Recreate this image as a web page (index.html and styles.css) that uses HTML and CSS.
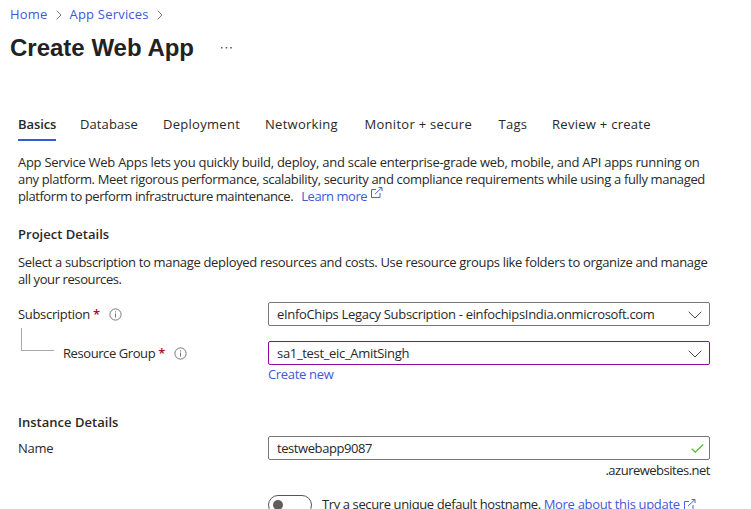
FILE: index.html
```html
<!DOCTYPE html>
<html lang="en">
<head>
<meta charset="utf-8">
<title>Create Web App</title>
<link rel="stylesheet" href="styles.css">
</head>
<body>
<header class="top">
  <nav class="crumbs">
    <a class="c-home">Home</a>
    <svg class="sep" width="6" height="10" viewBox="0 0 6 10"><path d="M.7.7 5 5 .7 9.3"/></svg>
    <a class="c-apps">App Services</a>
    <svg class="sep" width="6" height="10" viewBox="0 0 6 10"><path d="M.7.7 5 5 .7 9.3"/></svg>
  </nav>
  <div class="title-row">
    <h1>Create Web App</h1>
    <svg class="dots" width="11" height="2" viewBox="0 0 11 2"><path d="M0 0h1.500v1.500H0zM4.700 0h1.500v1.500H4.700zM9.300 0h1.500v1.500H9.300z"/></svg>
  </div>
</header>
<main>
  <nav class="tabs">
    <a class="tab t1 active">Basics</a><a class="tab t2">Database</a><a class="tab t3">Deployment</a><a class="tab t4">Networking</a><a class="tab t5">Monitor + secure</a><a class="tab t6">Tags</a><a class="tab t7">Review + create</a>
  </nav>
  <p class="intro"><span class="l1">App Service Web Apps lets you quickly build, deploy, and scale enterprise-grade web, mobile, and API apps running on</span><br><span class="l2">any platform. Meet rigorous performance, scalability, security and compliance requirements while using a fully managed</span><br><span class="l3">platform to perform infrastructure maintenance.</span><a class="learn">Learn more</a><svg class="ext up" width="12" height="11" viewBox="0 0 12 11"><path d="M5 2.500H.5v8h8.500V6M4 7 11 .5M7.500.5H11V4"/></svg></p>
  <h2 class="h-project">Project Details</h2>
  <p class="select-text"><span class="l4">Select a subscription to manage deployed resources and costs. Use resource groups like folders to organize and manage</span><br><span class="l5">all your resources.</span></p>
  <div class="row">
    <div class="label"><span class="f-sub">Subscription</span><span class="req">*</span><svg class="info" width="13" height="13" viewBox="0 0 13 13"><circle cx="6.500" cy="6.500" r="5.600"/><path d="M6.500 5.500v4M6.500 3.300v1.200"/></svg></div>
    <div class="field"><span class="v-sub">eInfoChips Legacy Subscription - einfochipsIndia.onmicrosoft.com</span><svg class="chev" width="14" height="8" viewBox="0 0 14 8"><path d="M.7.8 7 7 13.300.8"/></svg></div>
  </div>
  <div class="row second">
    <div class="label"><i class="elbow"></i><span class="f-rg">Resource Group</span><span class="req">*</span><svg class="info" width="13" height="13" viewBox="0 0 13 13"><circle cx="6.500" cy="6.500" r="5.600"/><path d="M6.500 5.500v4M6.500 3.300v1.200"/></svg></div>
    <div class="field focus"><span class="v-rg">sa1_test_eic_AmitSingh</span><svg class="chev" width="14" height="8" viewBox="0 0 14 8"><path d="M.7.8 7 7 13.300.8"/></svg></div>
  </div>
  <div class="create"><a class="new">Create new</a></div>
  <h2 class="h-instance">Instance Details</h2>
  <div class="row name">
    <div class="label"><span class="f-name">Name</span></div>
    <div class="field"><span class="v-name">testwebapp9087</span><svg class="check" width="13" height="9" viewBox="0 0 13 9"><path d="M.7 4.700 4.300 8.200 12.300.5"/></svg></div>
  </div>
  <div class="suffix"><span class="domain">.azurewebsites.net</span></div>
  <div class="toggle-row"><span class="toggle"></span><span class="try">Try a secure unique default hostname.</span><a class="more">More about this update</a><svg class="ext" width="12" height="11" viewBox="0 0 12 11"><path d="M5 2.500H.5v8h8.500V6M4 7 11 .5M7.500.5H11V4"/></svg></div>
</main>
</body>
</html>
```
FILE: styles.css
```css
* { box-sizing: border-box; }
html, body { height: 509px; overflow: hidden; }
body { margin: 0; background: #fff; color: #292827; font: 13px/17px "Open Sans", sans-serif; letter-spacing: -.32px; }
h1, h2, p { margin: 0; }
a { color: #4059d8; white-space: nowrap; }
span { white-space: nowrap; }
svg { fill: none; flex: none; }
.top { padding: 4px 0 0 10px; height: 100px; }
.crumbs { display: flex; align-items: center; height: 20px; letter-spacing: .2px; }
.sep { stroke: #777; margin: 1px 8px 0 8px; }
.title-row { display: flex; align-items: center; height: 32px; margin-top: 8px; }
h1 { font: bold 24px/32px "Liberation Sans", sans-serif; letter-spacing: 0; color: #222; }
.dots { fill: #555; margin-left: 27px; }
main { width: 692px; margin-left: 18px; }
.tabs { display: flex; height: 41px; padding-top: 8px; letter-spacing: .28px; }
.tab { color: #292827; height: 33px; line-height: 32px; flex: none; }
.tab.active { width: 38px; margin-right: 24px; font-weight: 600; letter-spacing: -.1px; border-bottom: 2px solid #335bda; }
.t2 { width: 83px; letter-spacing: .1px; }
.t3 { width: 102px; }
.t4 { width: 99.5px; }
.t5 { width: 134px; }
.t6 { width: 53.5px; }
.intro { height: 51px; margin-top: 13px; }
.l1 { letter-spacing: -.276px; }
.l2 { letter-spacing: -.345px; }
.l3 { letter-spacing: -.42px; }
.l4 { letter-spacing: -.33px; }
.l5 { letter-spacing: -.4px; }
.learn { margin-left: 8px; letter-spacing: -.45px; }
.ext { stroke: #4c63db; }
.up { margin: -5px 0 0 4px; vertical-align: 3px; }
h2 { font-size: 13px; line-height: 18px; font-weight: 600; letter-spacing: .02px; }
.h-project { margin-top: 20px; }
.select-text { margin-top: 11px; height: 34px; }
.row { display: flex; height: 24px; margin-top: 14px; }
.row.second { margin-top: 15px; }
.label { display: flex; align-items: center; width: 250px; flex: none; }
.f-rg { letter-spacing: -.42px; }
.f-name { letter-spacing: -.3px; }
.req { color: #a80f2c; font-weight: 600; margin-left: 3px; width: 7px; }
.info { stroke: #777; margin-left: 9px; margin-top: 1px; }
.field { display: flex; align-items: center; justify-content: space-between; width: 442px; flex: none; border: 1px solid #777; border-radius: 2px; padding: 0 8px; }
.field.focus { border-color: #9405a5; }
.v-name { letter-spacing: -.42px; }
.chev { stroke: #444; margin: 1px -1px 0 0; }
.check { stroke: #4fb82a; stroke-width: 1.2; margin-right: -3px; }
.elbow { width: 33px; height: 23px; margin: -28px 9px 0 3px; border: solid #aaa; border-width: 0 0 1px 1px; flex: none; }
.create { padding-left: 250px; height: 20px; margin-top: 1px; }
.h-instance { margin-top: 27px; }
.row.name { margin-top: 5px; }
.suffix { display: flex; justify-content: flex-end; margin-top: 2px; height: 17px; letter-spacing: -.5px; }
.toggle-row { display: flex; align-items: center; height: 20px; margin: 16px 0 0 250px; }
.toggle { display: flex; align-items: center; flex: none; width: 44px; height: 20px; border: 1px solid #555; border-radius: 10px; padding-left: 4px; margin-right: 10px; }
.toggle::before { content: ""; width: 10px; height: 10px; border-radius: 50%; background: #605e5c; }
.try { letter-spacing: -.39px; padding-bottom: 2px; }
.more { margin-left: 3px; padding-bottom: 2px; }
.toggle-row .ext { margin: 0 0 1px 4px; }
```
